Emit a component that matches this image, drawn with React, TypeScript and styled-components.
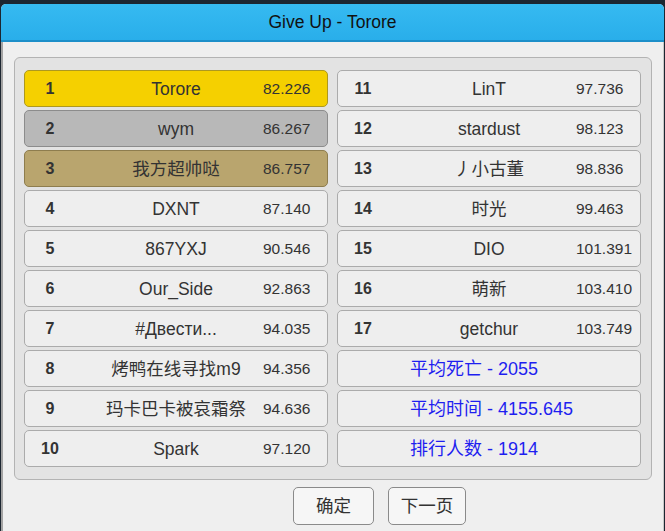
import React from "react";
import styled, { createGlobalStyle } from "styled-components";

const Global = createGlobalStyle`
  html, body { margin: 0; padding: 0; }
  body {
    background: #1c2631;
    font-family: "Liberation Sans", "Noto Sans CJK SC", sans-serif;
    width: 665px;
    height: 531px;
    overflow: hidden;
  }
`;

const Window = styled.div`
  margin: 4px 1px 0 1px;
  width: 663px;
  height: 540px;
  display: flex;
  flex-direction: column;
  background: #efefef;
  border-radius: 5px 5px 0 0;
`;

const TitleBar = styled.div`
  height: 36px;
  flex: none;
  display: flex;
  align-items: center;
  justify-content: center;
  background: linear-gradient(#36baf1, #29aeea);
  border-bottom: 2px solid #1c8fc9;
  border-radius: 5px 5px 0 0;
  color: #111;
  font-size: 17.5px;
`;

const Body = styled.div`
  flex: 1;
  display: flex;
  flex-direction: column;
  border-left: 2px solid #a3a3a3;
  border-right: 1px solid #c8c8c8;
  padding: 15px 11px 0 11px;
`;

const Panel = styled.div`
  background: #e3e3e3;
  border: 1px solid #b3b3b3;
  border-radius: 6px;
  padding: 12px 9px;
  display: grid;
  grid-template-columns: 304px 304px;
  grid-template-rows: repeat(10, 37px);
  grid-auto-flow: column;
  column-gap: 9px;
  row-gap: 3px;
`;

type Tier = "gold" | "silver" | "bronze" | "plain";

const tierBg: Record<Tier, string> = {
  gold: "#f5d000",
  silver: "#b8b8b8",
  bronze: "#b9a56e",
  plain: "#eeeeee",
};
const tierBorder: Record<Tier, string> = {
  gold: "#ad9820",
  silver: "#8c8c8c",
  bronze: "#8e7d4e",
  plain: "#ababab",
};

const Row = styled.div<{ $tier: Tier }>`
  box-sizing: border-box;
  border: 1px solid ${(p) => tierBorder[p.$tier]};
  background: ${(p) => tierBg[p.$tier]};
  border-radius: 5px;
  display: grid;
  grid-template-columns: 1fr;
  grid-template-rows: 1fr;
  align-items: center;
  padding-top: 1px;
  color: #333;
  white-space: nowrap;
  line-height: 20px;
`;

const Rank = styled.span`
  grid-area: 1 / 1;
  justify-self: start;
  width: 50px;
  text-align: center;
  font-weight: bold;
  font-size: 16px;
`;

const Name = styled.span`
  grid-area: 1 / 1;
  justify-self: center;
  font-size: 17.5px;
`;

const Score = styled.span`
  grid-area: 1 / 1;
  justify-self: start;
  margin-left: 238px;
  font-size: 15.5px;
`;

const Stat = styled.span`
  grid-area: 1 / 1;
  justify-self: start;
  margin-left: 72px;
  color: #1e1ef0;
  font-size: 18px;
`;

const ButtonBar = styled.div`
  display: flex;
  justify-content: center;
  gap: 14px;
  padding-left: 93px;
  margin-top: 7px;
`;

const Button = styled.button<{ $w: number }>`
  width: ${(p) => p.$w}px;
  height: 38px;
  box-sizing: border-box;
  background: #f6f6f6;
  border: 1px solid #8a8a8a;
  border-radius: 5px;
  color: #333;
  font-family: "Liberation Sans", "Noto Sans CJK SC", sans-serif;
  font-size: 17.5px;
  line-height: 20px;
  padding: 0;
`;

const entries: [number, string, string][] = [
  [1, "Torore", "82.226"],
  [2, "wym", "86.267"],
  [3, "我方超帅哒", "86.757"],
  [4, "DXNT", "87.140"],
  [5, "867YXJ", "90.546"],
  [6, "Our_Side", "92.863"],
  [7, "#Двести...", "94.035"],
  [8, "烤鸭在线寻找m9", "94.356"],
  [9, "玛卡巴卡被哀霜祭", "94.636"],
  [10, "Spark", "97.120"],
  [11, "LinT", "97.736"],
  [12, "stardust", "98.123"],
  [13, "丿小古董", "98.836"],
  [14, "时光", "99.463"],
  [15, "DIO", "101.391"],
  [16, "萌新", "103.410"],
  [17, "getchur", "103.749"],
];

const stats = ["平均死亡 - 2055", "平均时间 - 4155.645", "排行人数 - 1914"];

const tierOf = (r: number): Tier =>
  r === 1 ? "gold" : r === 2 ? "silver" : r === 3 ? "bronze" : "plain";

export default function App() {
  return (
    <>
      <Global />
      <Window>
        <TitleBar>Give Up - Torore</TitleBar>
        <Body>
          <Panel>
            {entries.map(([r, n, s]) => (
              <Row key={r} $tier={tierOf(r)}>
                <Rank>{r}</Rank>
                <Name>{n}</Name>
                <Score>{s}</Score>
              </Row>
            ))}
            {stats.map((t) => (
              <Row key={t} $tier="plain">
                <Stat>{t}</Stat>
              </Row>
            ))}
          </Panel>
          <ButtonBar>
            <Button $w={81}>确定</Button>
            <Button $w={78}>下一页</Button>
          </ButtonBar>
        </Body>
      </Window>
    </>
  );
}
